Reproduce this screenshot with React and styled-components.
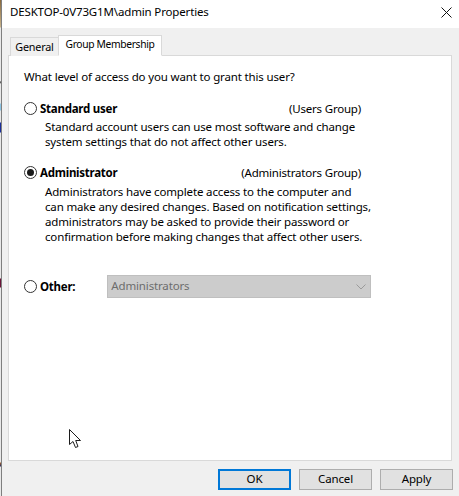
import React from "react";
import styled, { createGlobalStyle } from "styled-components";

const Global = createGlobalStyle`
  html, body { margin: 0; padding: 0; background: #f0f0f0; }
  body { font-family: "Noto Sans", "Open Sans", sans-serif; font-size: 11.5px; color: #000; }
`;

const Screen = styled.div`
  width: 459px;
  height: 496px;
  display: flex;
  overflow: hidden;
`;

const Backdrop = styled.div`
  width: 1px;
  flex: none;
  background: linear-gradient(to bottom,
    #8a6a3c 0, #c9b48c 27px, #e8e8e8 28px, #e8e8e8 81px, #333 82px, #e8e8e8 84px,
    #e8e8e8 103px, #8cc4e4 104px, #8cc4e4 110px, #e8e8e8 111px, #e8e8e8 122px,
    #1b2f9c 123px, #1b2f9c 132px, #e8e8e8 133px, #e8e8e8 278px, #6a1438 279px,
    #6a1438 287px, #e8e8e8 288px, #e8e8e8 462px, #a06030 463px, #303060 466px, #e8e8e8 467px);
`;

const Window = styled.div`
  flex: 1;
  min-width: 0;
  display: flex;
  flex-direction: column;
  border-left: 1px solid #7f7f7f;
  background: #f0f0f0;
`;

const TitleBar = styled.div`
  height: 28px;
  box-sizing: border-box;
  flex: none;
  background: #fff;
  display: flex;
  align-items: center;
  justify-content: space-between;
  padding: 0 7px 5px 8px;
  letter-spacing: -0.15px;
`;

const CloseIcon = styled.svg`
  width: 11px;
  height: 11px;
  margin-top: 1px;
`;

const Body = styled.div`
  flex: 1;
  display: flex;
  flex-direction: column;
  padding: 8px 6px 0 6px;
`;

const TabStrip = styled.div`
  height: 20px;
  display: flex;
  align-items: flex-end;
  padding-left: 2px;
  position: relative;
  z-index: 1;
  margin-bottom: -1px;
`;

const Tab = styled.div`
  box-sizing: border-box;
  border: 1px solid #d9d9d9;
  display: flex;
  align-items: center;
  justify-content: center;
  white-space: nowrap;
  font-size: ${(p) => (p.$active ? "10.3px" : "10.8px")};
  letter-spacing: ${(p) => (p.$active ? "-0.35px" : "-0.2px")};
  width: ${(p) => (p.$active ? "104px" : "48px")};
  height: ${(p) => (p.$active ? "21px" : "19px")};
  background: ${(p) => (p.$active ? "#fff" : "#f0f0f0")};
  border-bottom: ${(p) => (p.$active ? "1px solid #fff" : "none")};
  border-right: ${(p) => (p.$active ? "1px solid #d9d9d9" : "none")};
  padding-bottom: ${(p) => (p.$active ? "4px" : "1px")};
`;

const Panel = styled.div`
  box-sizing: border-box;
  width: 444px;
  height: 406px;
  border: 1px solid #d9d9d9;
  background: #fff;
  padding: 13px 15px 0 15px;
  position: relative;
`;

const Line = styled.div`
  line-height: 15px;
  height: 15px;
  white-space: nowrap;
  letter-spacing: -0.15px;
`;

const Question = styled(Line)``;

const OptionRow = styled.div`
  display: flex;
  align-items: center;
  height: 15px;
  line-height: 15px;
  margin-top: ${(p) => p.$top}px;
  width: 337px;
  white-space: nowrap;
`;

const Radio = styled.span`
  box-sizing: border-box;
  width: 13px;
  height: 13px;
  flex: none;
  border: 1px solid #333;
  border-radius: 50%;
  background: #fff;
  margin-right: 3px;
  display: flex;
  align-items: center;
  justify-content: center;
  &::after {
    content: "";
    width: 7px;
    height: 7px;
    border-radius: 50%;
    background: ${(p) => (p.$checked ? "#1a1a1a" : "transparent")};
  }
`;

const OptionName = styled.span`
  font-weight: 700;
  letter-spacing: -0.25px;
`;

const GroupName = styled.span`
  margin-left: auto;
  letter-spacing: -0.2px;
`;

const Description = styled.div`
  margin: ${(p) => p.$top}px 0 0 21px;
`;

const OtherRow = styled.div`
  display: flex;
  align-items: center;
  height: 23px;
  margin-top: 31px;
`;

const Select = styled.div`
  box-sizing: border-box;
  width: 264px;
  height: 23px;
  margin-left: 32px;
  background: #cccccc;
  border: 1px solid #bfbfbf;
  color: #6d6d6d;
  display: flex;
  align-items: center;
  justify-content: space-between;
  padding: 0 4px 2px 3px;
  letter-spacing: -0.15px;
`;

const Chevron = styled.svg`
  width: 10px;
  height: 6px;
  margin-top: 3px;
`;

const Pointer = styled.svg`
  position: absolute;
  left: 60px;
  top: 373px;
  width: 13px;
  height: 20px;
`;

const Footer = styled.div`
  display: flex;
  justify-content: flex-end;
  gap: 8px;
  margin-top: 8px;
`;

const Button = styled.div`
  box-sizing: border-box;
  width: 73px;
  height: 21px;
  background: #e1e1e1;
  border: ${(p) => (p.$primary ? "2px solid #0078d7" : "1px solid #adadad")};
  display: flex;
  align-items: center;
  justify-content: center;
  padding-bottom: 2px;
  letter-spacing: -0.15px;
`;

export default function App() {
  return (
    <Screen>
      <Global />
      <Backdrop />
      <Window>
        <TitleBar>
          <span>DESKTOP-0V73G1M\admin Properties</span>
          <CloseIcon viewBox="0 0 11 11">
            <path d="M0.5 0.5 L10.5 10.5 M10.5 0.5 L0.5 10.5" stroke="#111" strokeWidth="1" fill="none" />
          </CloseIcon>
        </TitleBar>
        <Body>
          <TabStrip>
            <Tab>General</Tab>
            <Tab $active>Group Membership</Tab>
          </TabStrip>
          <Panel>
            <Question>What level of access do you want to grant this user?</Question>
            <OptionRow $top={17}>
              <Radio />
              <OptionName>Standard user</OptionName>
              <GroupName>(Users Group)</GroupName>
            </OptionRow>
            <Description $top={3}>
              <Line>Standard account users can use most software and change</Line>
              <Line>system settings that do not affect other users.</Line>
            </Description>
            <OptionRow $top={16}>
              <Radio $checked />
              <OptionName>Administrator</OptionName>
              <GroupName>(Administrators Group)</GroupName>
            </OptionRow>
            <Description $top={4}>
              <Line>Administrators have complete access to the computer and</Line>
              <Line>can make any desired changes. Based on notification settings,</Line>
              <Line>administrators may be asked to provide their password or</Line>
              <Line>confirmation before making changes that affect other users.</Line>
            </Description>
            <OtherRow>
              <Radio />
              <OptionName>Other:</OptionName>
              <Select>
                <span>Administrators</span>
                <Chevron viewBox="0 0 10 6">
                  <path d="M0.5 0.5 L5 5 L9.5 0.5" stroke="#9a9a9a" strokeWidth="1" fill="none" />
                </Chevron>
              </Select>
            </OtherRow>
            <Pointer viewBox="0 0 13 20">
              <path d="M0.5 0.5 V15.5 L4 12.5 L6.5 18.5 L9 17.5 L6.7 11.5 H11.5 Z" fill="#fff" stroke="#1c1c1c" strokeWidth="1" />
            </Pointer>
          </Panel>
          <Footer>
            <Button $primary>OK</Button>
            <Button>Cancel</Button>
            <Button>Apply</Button>
          </Footer>
        </Body>
      </Window>
    </Screen>
  );
}
